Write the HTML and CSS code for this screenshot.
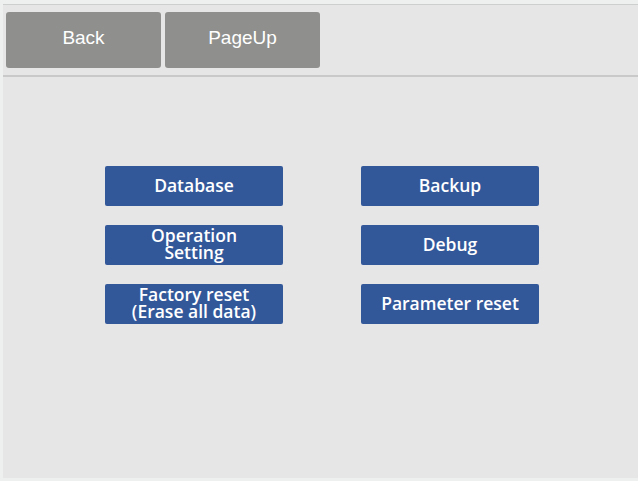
FILE: index.html
```html
<!DOCTYPE html>
<html>
<head>
<meta charset="utf-8">
<link rel="stylesheet" href="styles.css">
</head>
<body>
<div class="screen">
  <div class="toolbar">
    <div class="tbtn">Back</div>
    <div class="tbtn">PageUp</div>
  </div>
  <div class="menu">
    <div class="mbtn">Database</div>
    <div class="mbtn">Backup</div>
    <div class="mbtn two">Operation<br>Setting</div>
    <div class="mbtn">Debug</div>
    <div class="mbtn two">Factory reset<br>(Erase all data)</div>
    <div class="mbtn">Parameter reset</div>
  </div>
</div>
</body>
</html>
```
FILE: styles.css
```css
html, body {
  margin: 0;
  padding: 0;
  background: #eef0f0;
}
.screen {
  margin: 4px 0 0 3px;
  height: 474px;
  background: #e6e6e6;
  border-top: 1px solid #cdcfcf;
  box-sizing: border-box;
}
.toolbar {
  display: flex;
  gap: 4px;
  height: 72px;
  padding: 7px 0 0 3px;
  box-sizing: border-box;
  border-bottom: 2px solid #c9c9c9;
}
.tbtn {
  width: 155px;
  height: 56px;
  padding-bottom: 4px;
  box-sizing: border-box;
  background: #8f908d;
  border-radius: 3px;
  color: #fff;
  font-family: "Liberation Sans", Arial, sans-serif;
  font-size: 19px;
  display: flex;
  align-items: center;
  justify-content: center;
}
.menu {
  display: grid;
  grid-template-columns: 178px 178px;
  column-gap: 78px;
  row-gap: 19px;
  padding: 89px 0 0 102px;
}
.mbtn {
  height: 40px;
  padding-bottom: 2px;
  box-sizing: border-box;
  background: #33589a;
  border-radius: 2px;
  color: #fff;
  font-family: "Open Sans", "Noto Sans", sans-serif;
  font-weight: 600;
  font-size: 17.5px;
  line-height: 17px;
  text-align: center;
  display: flex;
  align-items: center;
  justify-content: center;
}
```
